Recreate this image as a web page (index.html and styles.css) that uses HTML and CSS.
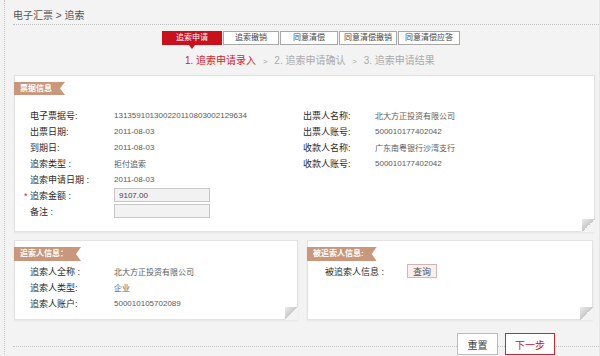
FILE: index.html
```html
<!DOCTYPE html>
<html lang="zh-CN">

<head>
    <meta charset="UTF-8">
    <meta name="viewport" content="width=device-width, initial-scale=1.0">
    <title>电子汇票 - 追索</title>
    <link rel="stylesheet" href="styles.css">
</head>

<body>
    <div class="page">
        <div class="crumb">电子汇票 &gt; 追索</div>

        <div class="tabs">
            <span class="tab active">追索申请</span>
            <span class="tab">追索撤销</span>
            <span class="tab">同意清偿</span>
            <span class="tab">同意清偿撤销</span>
            <span class="tab">同意清偿应答</span>
        </div>

        <div class="steps">
            <span class="current">1. 追索申请录入</span>
            <span class="sep">&gt;</span> 2. 追索申请确认
            <span class="sep">&gt;</span> 3. 追索申请结果
        </div>

        <div class="panel">
            <div class="ribbon">票据信息</div>
            <div class="cols">
                <div class="col">
                    <div class="row"><span class="label">电子票据号:</span><span class="value">131359101300220110803002129634</span></div>
                    <div class="row"><span class="label">出票日期:</span><span class="value">2011-08-03</span></div>
                    <div class="row"><span class="label">到期日:</span><span class="value">2011-08-03</span></div>
                    <div class="row"><span class="label">追索类型 :</span><span class="value">拒付追索</span></div>
                    <div class="row"><span class="label">追索申请日期 :</span><span class="value">2011-08-03</span></div>
                    <div class="row"><span class="label"><span class="req">*</span>追索金额 :</span><input class="field" type="text" value="9107.00"></div>
                    <div class="row"><span class="label">备注 :</span><input class="field" type="text" value=""></div>
                </div>
                <div class="col col-right">
                    <div class="row"><span class="label">出票人名称:</span><span class="value">北大方正投资有限公司</span></div>
                    <div class="row"><span class="label">出票人账号:</span><span class="value">500010177402042</span></div>
                    <div class="row"><span class="label">收款人名称:</span><span class="value">广东南粤银行沙湾支行</span></div>
                    <div class="row"><span class="label">收款人账号:</span><span class="value">500010177402042</span></div>
                </div>
            </div>
        </div>

        <div class="pair">
            <div class="panel small">
                <div class="ribbon">追索人信息：</div>
                <div class="list">
                    <div class="row"><span class="label">追索人全称 :</span><span class="value">北大方正投资有限公司</span></div>
                    <div class="row"><span class="label">追索人类型:</span><span class="value">企业</span></div>
                    <div class="row"><span class="label">追索人账户:</span><span class="value">500010105702089</span></div>
                </div>
            </div>
            <div class="panel small">
                <div class="ribbon">被追索人信息:</div>
                <div class="list list-right">
                    <div class="row"><span class="label">被追索人信息 :</span><button class="query" type="button">查询</button></div>
                </div>
            </div>
        </div>

        <div class="actions">
            <button class="btn" type="button">重置</button>
            <button class="btn btn-next" type="button">下一步</button>
        </div>
        <div class="foot"></div>
    </div>
</body>

</html>
```

FILE: styles.css
```css
body {
    margin: 0;
    background-color: #f3f3f3;
    font-family: "Liberation Sans", "Noto Sans CJK SC", sans-serif;
    font-size: 9px;
    color: #333;
}

.page {
    margin-left: 4px;
    padding: 0 4px 0 9px;
    border-left: 1px dotted #c4c4c4;
    border-right: 1px solid #e6e6e6;
    min-height: 356px;
    box-sizing: border-box;
}

.crumb {
    margin: 0 -4px 0 -1px;
    padding: 9px 0 1px;
    line-height: 14px;
    font-size: 10px;
    color: #555;
    border-bottom: 1px dotted #c0c0c0;
}

.tabs {
    display: flex;
    gap: 1px;
    margin: 6px 0 0 148px;
}

.tab {
    position: relative;
    height: 14px;
    line-height: 12px;
    padding: 0;
    box-sizing: border-box;
    border: 1px solid #a8a8a8;
    background: #fff;
    color: #444;
    font-size: 8px;
    text-align: center;
    white-space: nowrap;
}

.tab:nth-child(1) { width: 60px; }
.tab:nth-child(2) { width: 56px; }
.tab:nth-child(3) { width: 58px; }
.tab:nth-child(4) { width: 58px; }
.tab:nth-child(5) { width: 62px; }

.tab.active {
    background: #c8111b;
    border-color: #c8111b;
    color: #fff;
}

.tab.active::after {
    content: "";
    position: absolute;
    left: 50%;
    bottom: -5px;
    margin-left: -3px;
    border-left: 3px solid transparent;
    border-right: 3px solid transparent;
    border-top: 4px solid #c8111b;
}

.steps {
    margin: 9px 0 0 171px;
    line-height: 14px;
    font-size: 10px;
    color: #aaa;
}

.steps .current {
    color: #d3232c;
}

.steps .sep {
    margin: 0 4px;
    font-size: 8px;
}

.panel {
    position: relative;
    margin-top: 6px;
    background: #fff;
    border: 1px solid #e2e2e2;
    box-shadow: 0 1px 2px rgba(0, 0, 0, 0.06);
    padding-bottom: 12px;
}

.panel::after {
    content: "";
    position: absolute;
    right: -1px;
    bottom: -1px;
    width: 13px;
    height: 13px;
    background: linear-gradient(315deg, #f3f3f3 50%, #c9c9c9 50%, #ececec 100%);
}

.ribbon {
    width: fit-content;
    margin: 6px 0 0 -1px;
    height: 13px;
    line-height: 13px;
    padding: 0 13px 0 6px;
    background: #c9977b;
    color: #fff;
    font-size: 8px;
    font-weight: bold;
    clip-path: polygon(0 0, 100% 0, calc(100% - 5px) 50%, 100% 100%, 0 100%);
}

.cols {
    display: grid;
    grid-template-columns: 273px 1fr;
    padding: 12px 0 0 15px;
}

.row {
    display: flex;
    align-items: center;
    height: 16px;
}

.label {
    width: 84px;
    flex-shrink: 0;
    color: #2b2b2b;
}

.col-right .label {
    width: 72px;
}

.value {
    font-size: 8px;
    color: #5a5a5a;
}

.req {
    display: inline-block;
    width: 6px;
    margin-left: -6px;
    color: #e0262e;
}

.field {
    width: 96px;
    height: 14px;
    box-sizing: border-box;
    margin: 0;
    padding: 0 4px;
    border: 1px solid #c8c8c8;
    background: #f2f2f2;
    font-family: inherit;
    font-size: 8px;
    color: #444;
}

.pair {
    display: grid;
    grid-template-columns: 284px 286px;
    gap: 9px;
    margin-top: 8px;
}

.panel.small {
    margin-top: 0;
    padding-bottom: 8px;
}

.panel.small .ribbon {
    height: 14px;
    line-height: 14px;
}

.list {
    padding: 2px 0 0 15px;
}

.list-right {
    padding-left: 17px;
}

.list-right .label {
    width: 82px;
}

.query {
    width: 30px;
    height: 14px;
    margin: 0;
    padding: 0;
    border: 1px solid #d6b4b4;
    background: #f9efef;
    font-family: inherit;
    font-size: 9px;
    color: #555;
}

.actions {
    display: flex;
    justify-content: flex-end;
    align-items: flex-start;
    gap: 7px;
    height: 13px;
    margin-top: 13px;
    padding-right: 40px;
}

.btn {
    flex-shrink: 0;
    width: 41px;
    height: 22px;
    margin: 0;
    padding: 0;
    background: #fff;
    border: 1px solid #bdbdbd;
    font-family: inherit;
    font-size: 10px;
    color: #444;
}

.btn-next {
    width: 50px;
    border-color: #d6222c;
    color: #c8111b;
}

.foot {
    margin: 0 -4px 0 -1px;
    border-top: 1px dotted #c4c4c4;
}
```
